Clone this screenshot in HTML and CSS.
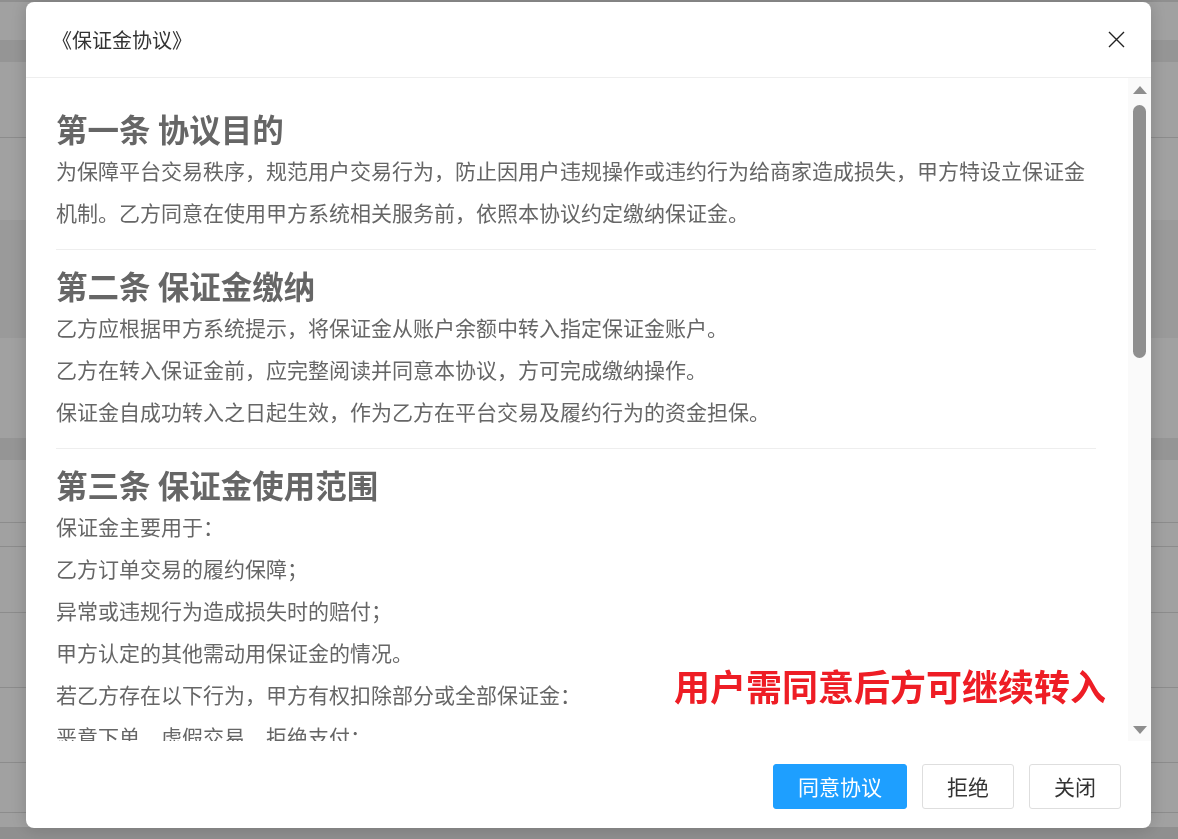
FILE: index.html
```html
<!DOCTYPE html>
<html>
<head>
<meta charset="utf-8" />
<title>保证金协议</title>
<link rel="stylesheet" href="styles.css">
</head>
<body>
<div class="page">
  <div class="row top"></div>
  <div class="row h15"></div>
  <div class="row h23"></div>
  <div class="row band h22"></div>
  <div class="row line h76"></div>
  <div class="row h82"></div>
  <div class="row soft h118"></div>
  <div class="row h100"></div>
  <div class="row band h22"></div>
  <div class="row line h63"></div>
  <div class="row line h24"></div>
  <div class="row line h66"></div>
  <div class="row line h75"></div>
  <div class="row line h75"></div>
  <div class="row line h50"></div>
  <div class="row h14"></div>
  <div class="row foot"></div>
</div>

<div class="shade">
  <div class="layer">
    <div class="layer-title">
      <span>《保证金协议》</span>
      <a class="layer-close" href="#">
        <svg width="17" height="17" viewBox="0 0 17 17"><path d="M1 1L16 16M16 1L1 16" stroke="#222" stroke-width="1.4" fill="none"/></svg>
      </a>
    </div>
    <div class="layer-body">
      <div class="agreement">
        <div class="clause">
          <h2>第一条 协议目的</h2>
          <p>为保障平台交易秩序，规范用户交易行为，防止因用户违规操作或违约行为给商家造成损失，甲方特设立保证金机制。乙方同意在使用甲方系统相关服务前，依照本协议约定缴纳保证金。</p>
        </div>
        <div class="clause">
          <h2>第二条 保证金缴纳</h2>
          <p>乙方应根据甲方系统提示，将保证金从账户余额中转入指定保证金账户。</p>
          <p>乙方在转入保证金前，应完整阅读并同意本协议，方可完成缴纳操作。</p>
          <p>保证金自成功转入之日起生效，作为乙方在平台交易及履约行为的资金担保。</p>
        </div>
        <div class="clause">
          <h2>第三条 保证金使用范围</h2>
          <p>保证金主要用于：</p>
          <p>乙方订单交易的履约保障；</p>
          <p>异常或违规行为造成损失时的赔付；</p>
          <p>甲方认定的其他需动用保证金的情况。</p>
          <p>若乙方存在以下行为，甲方有权扣除部分或全部保证金：</p>
          <p>恶意下单、虚假交易、拒绝支付；</p>
        </div>
      </div>
      <div class="scrollbar">
        <span class="arrow up"></span>
        <div class="track"><span class="thumb"></span></div>
        <span class="arrow down"></span>
      </div>
    </div>
    <div class="layer-btns">
      <a class="btn primary" href="#">同意协议</a>
      <a class="btn" href="#">拒绝</a>
      <a class="btn" href="#">关闭</a>
    </div>
    <div class="note">用户需同意后方可继续转入</div>
  </div>
</div>
</body>
</html>
```

FILE: styles.css
```css
* {
  box-sizing: border-box;
}
body {
  margin: 0;
  font-family: "Noto Sans CJK SC", "Noto Sans", sans-serif;
  overflow: hidden;
}
.page {
  background: #fff;
}
.row.top { height: 2px; background: #e2e2e2; }
.row.band { background: #ededed; }
.row.soft { background: #f4f4f4; }
.row.line { border-bottom: 1px solid #dedede; }
.row.foot { height: 20px; background: #e2e2e2; }
.h14 { height: 14px; }
.h15 { height: 15px; }
.h22 { height: 22px; }
.h23 { height: 23px; }
.h24 { height: 24px; }
.h50 { height: 50px; }
.h63 { height: 63px; }
.h66 { height: 66px; }
.h75 { height: 75px; }
.h76 { height: 76px; }
.h82 { height: 82px; }
.h100 { height: 100px; }
.h118 { height: 118px; }

.shade {
  position: fixed;
  top: 0;
  left: 0;
  right: 0;
  bottom: 0;
  background: rgba(0, 0, 0, .37);
  display: flex;
  align-items: flex-start;
  padding: 2px 0 0 26px;
}
.layer {
  position: relative;
  width: 1125px;
  height: 826px;
  background: #fff;
  border-radius: 8px;
  box-shadow: 0 0 18px rgba(0, 0, 0, .18);
  display: flex;
  flex-direction: column;
  overflow: hidden;
}
.layer-title {
  height: 76px;
  flex: none;
  border-bottom: 1px solid #eee;
  display: flex;
  align-items: center;
  justify-content: space-between;
  padding: 0 26px 0 26px;
  font-size: 20px;
  color: #333;
}
.layer-close {
  display: flex;
  width: 17px;
  height: 17px;
}
.layer-body {
  height: 663px;
  flex: none;
  display: flex;
}
.agreement {
  flex: 1;
  overflow: hidden;
  padding: 15px 32px 0 30px;
  color: #666;
}
.clause {
  padding: 14px 0 16px;
  border-bottom: 1px solid #eee;
}
.clause h2 {
  margin: 0;
  font-size: 31.5px;
  line-height: 42px;
  font-weight: bold;
  color: #666;
}
.clause p {
  margin: 0;
  font-size: 21px;
  line-height: 42px;
}
.scrollbar {
  width: 23px;
  flex: none;
  background: #fafafa;
  display: flex;
  flex-direction: column;
  align-items: center;
  padding: 8px 0 7px;
}
.arrow {
  width: 0;
  height: 0;
  border-left: 7px solid transparent;
  border-right: 7px solid transparent;
}
.arrow.up {
  border-bottom: 8px solid #8e8e8e;
}
.arrow.down {
  border-top: 8px solid #8e8e8e;
}
.track {
  flex: 1;
  width: 13px;
  padding-top: 11px;
}
.thumb {
  display: block;
  height: 253px;
  border-radius: 7px;
  background: #8f8f8f;
}
.layer-btns {
  flex: 1;
  display: flex;
  justify-content: flex-end;
  gap: 15px;
  padding: 23px 30px 0 0;
}
.btn {
  height: 45px;
  line-height: 43px;
  padding: 0 24px;
  border: 1px solid #dedede;
  border-radius: 3px;
  font-size: 21px;
  color: #333;
  text-decoration: none;
  background: #fff;
}
.btn.primary {
  background: #1e9fff;
  border-color: #1e9fff;
  color: #fff;
}
.note {
  position: absolute;
  left: 648px;
  top: 661px;
  font-size: 36px;
  font-weight: bold;
  line-height: 44px;
  color: #ee1d25;
}
```
